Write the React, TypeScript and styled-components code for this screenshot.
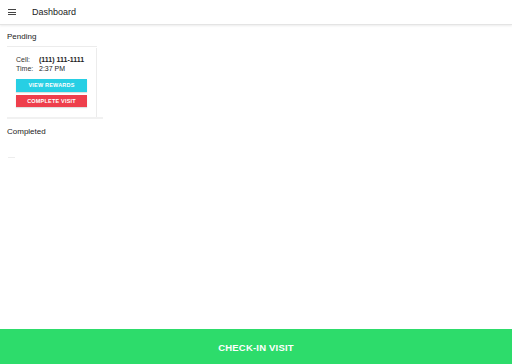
import React from "react";
import styled, { createGlobalStyle } from "styled-components";

const Global = createGlobalStyle`
  html, body { margin: 0; padding: 0; background: #fff; }
  body { font-family: "Liberation Sans", Arial, sans-serif; }
  #root { height: 364px; }
`;

const Page = styled.div`
  width: 512px;
  height: 364px;
  display: flex;
  flex-direction: column;
  overflow: hidden;
`;

const Header = styled.header`
  height: 24px;
  flex: none;
  display: flex;
  align-items: center;
  padding-left: 8px;
  gap: 16px;
  border-bottom: 1px solid #e4e4e4;
  box-shadow: 0 1px 2px rgba(0, 0, 0, 0.08);
  position: relative;
  z-index: 1;
`;

const Burger = styled.div`
  width: 8px;
  display: flex;
  flex-direction: column;
  gap: 1.7px;
  span { height: 1px; background: #444; display: block; }
`;

const Title = styled.div`
  font-size: 9px;
  color: #222;
`;

const Main = styled.main`
  flex: 1;
  padding: 6px 7px 0;
`;

const SectionTitle = styled.div`
  font-size: 8px;
  color: #222;
  line-height: 10px;
  margin-top: 1px;
`;

const Card = styled.div`
  width: 90px;
  margin-top: 4px;
  border-top: 1px solid #ececec;
  padding: 8px 0 10px 9px;
  box-sizing: border-box;
  display: flex;
  flex-direction: column;
  position: relative;
  &::after {
    content: "";
    position: absolute;
    right: 0;
    top: 1px;
    bottom: 0;
    width: 1px;
    background: #ececec;
  }
`;

const Underline = styled.div`
  width: 96px;
  height: 2px;
  background: #f1f1f1;
  margin-bottom: 8px;
`;

const InfoRow = styled.div`
  display: flex;
  font-size: 7px;
  line-height: 9px;
  color: #333;
`;

const Label = styled.span`
  width: 23px;
`;

const Value = styled.span<{ $bold?: boolean }>`
  font-weight: ${(p) => (p.$bold ? 700 : 400)};
  color: #222;
`;

const Buttons = styled.div`
  display: flex;
  flex-direction: column;
  gap: 3px;
  margin-top: 6px;
`;

const Button = styled.div<{ $bg: string }>`
  width: 71px;
  height: 12.5px;
  background: ${(p) => p.$bg};
  color: #fff;
  font-size: 5.5px;
  font-weight: 700;
  letter-spacing: 0.2px;
  display: flex;
  align-items: center;
  justify-content: center;
  text-transform: uppercase;
  box-shadow: 0 1px 1px rgba(0, 0, 0, 0.12);
`;

const Faint = styled.div`
  width: 7px;
  height: 1px;
  background: #ededed;
  margin: 20px 0 0 1px;
`;

const Footer = styled.div`
  height: 35px;
  flex: none;
  background: #2ddc6b;
  color: #fff;
  font-size: 9.5px;
  font-weight: 700;
  display: flex;
  align-items: center;
  justify-content: center;
  letter-spacing: 0.2px;
  padding-top: 2px;
  box-sizing: border-box;
`;

export default function App() {
  return (
    <Page>
      <Global />
      <Header>
        <Burger>
          <span />
          <span />
          <span />
        </Burger>
        <Title>Dashboard</Title>
      </Header>
      <Main>
        <SectionTitle>Pending</SectionTitle>
        <Card>
          <InfoRow>
            <Label>Cell:</Label>
            <Value $bold>(111) 111-1111</Value>
          </InfoRow>
          <InfoRow>
            <Label>Time:</Label>
            <Value>2:37 PM</Value>
          </InfoRow>
          <Buttons>
            <Button $bg="#27cfe4">View Rewards</Button>
            <Button $bg="#ee3f4c">Complete Visit</Button>
          </Buttons>
        </Card>
        <Underline />
        <SectionTitle>Completed</SectionTitle>
        <Faint />
      </Main>
      <Footer>CHECK-IN VISIT</Footer>
    </Page>
  );
}
